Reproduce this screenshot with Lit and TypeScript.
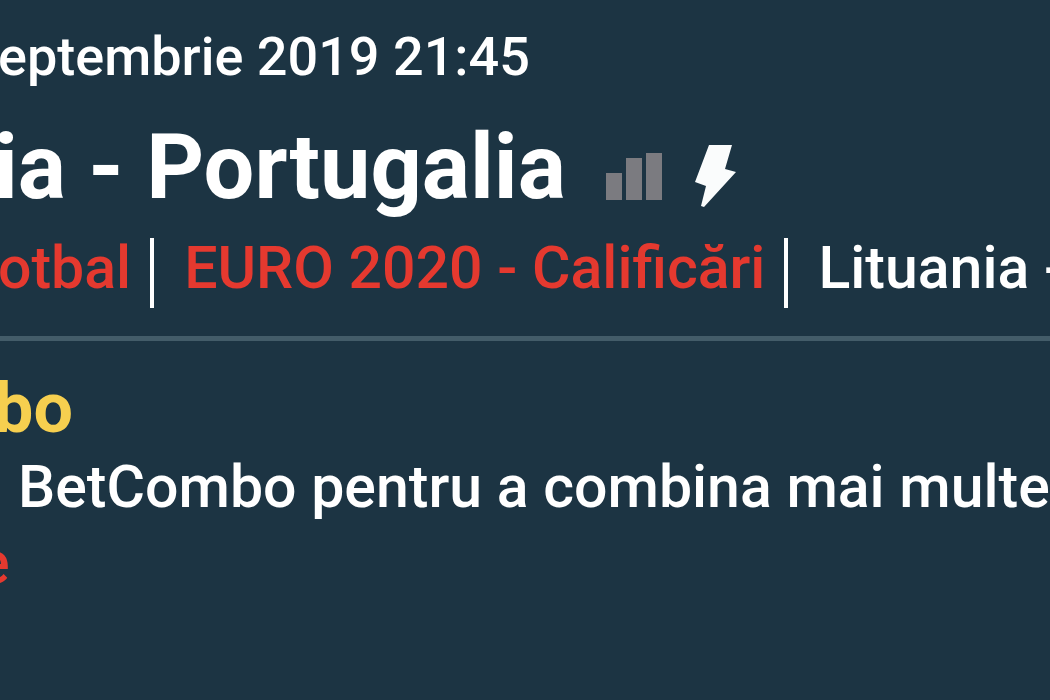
import { LitElement, html, css } from "lit";
import { customElement } from "lit/decorators.js";

@customElement("app-root")
export class AppRoot extends LitElement {
  static styles = css`
    :host {
      display: block;
      min-height: 100vh;
      overflow: hidden;
      background: #1c3443;
      color: #fff;
      font-family: Roboto, "Liberation Sans", sans-serif;
      font-weight: 500;
      white-space: nowrap;
    }
    .page {
      margin-left: -6px;
    }
    .header {
      padding: 19px 0 28px;
      border-bottom: 5px solid #435c69;
    }
    .date {
      display: block;
      padding-left: 4px;
      font-size: 54px;
      line-height: 76px;
    }
    .heading {
      display: flex;
      align-items: center;
      margin: 19px 0 16px;
    }
    .title {
      margin: 0;
      font-size: 90px;
      line-height: 108px;
      font-weight: 700;
    }
    .stats {
      width: 56px;
      height: 48px;
      margin: 16px 32px 0 40px;
      fill: #7b7b80;
    }
    .bolt {
      width: 42px;
      height: 64px;
      margin-top: 16px;
      fill: #fafcfc;
    }
    .crumbs {
      display: flex;
      margin: 0;
      padding: 0 0 0 4px;
      list-style: none;
      font-size: 59px;
      line-height: 60px;
    }
    .crumb {
      padding-bottom: 10px;
    }
    .crumb:not(:last-child) {
      border-right: 4px solid #fff;
      padding-right: 19px;
      margin-right: 30px;
    }
    .link {
      color: #e5392f;
      text-decoration: none;
    }
    .promo {
      padding-top: 29px;
      font-size: 59px;
      line-height: 76px;
    }
    .promo-title {
      margin: 0 0 3px;
      font-size: 70px;
      line-height: 76px;
      font-weight: 700;
      color: #f6cf4f;
    }
    .promo-text {
      margin: 0;
      padding-left: 24px;
    }
    .more {
      margin-left: -16px;
    }
  `;

  render() {
    return html`
      <main class="page">
        <header class="header">
          <time class="date" datetime="2019-09-10T21:45">eptembrie 2019 21:45</time>
          <div class="heading">
            <h1 class="title">ia - Portugalia</h1>
            <svg class="stats" viewBox="0 0 56 48" aria-hidden="true">
              <rect x="0" y="21" width="16" height="27" />
              <rect x="20" y="6" width="16" height="42" />
              <rect x="40" y="1" width="16" height="47" />
            </svg>
            <svg class="bolt" viewBox="0 0 42 64" aria-hidden="true">
              <path d="M15 1H38L31 25L42 28L10 63L7 62L12 42L1 38Z" />
            </svg>
          </div>
          <ul class="crumbs">
            <li class="crumb"><a class="link" href="#">otbal</a></li>
            <li class="crumb"><a class="link" href="#">EURO 2020 - Calificări</a></li>
            <li class="crumb">Lituania -</li>
          </ul>
        </header>
        <section class="promo">
          <h2 class="promo-title">bo</h2>
          <p class="promo-text">BetCombo pentru a combina mai multe</p>
          <a class="link more" href="#">e</a>
        </section>
      </main>
    `;
  }
}
